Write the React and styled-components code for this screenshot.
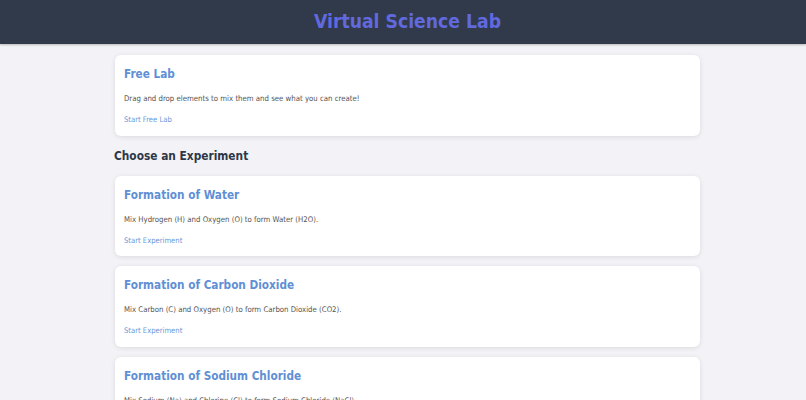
import React from 'react';
import styled, { createGlobalStyle } from 'styled-components';

const GlobalStyle = createGlobalStyle`
  html, body {
    margin: 0;
    padding: 0;
    overflow: hidden;
  }
  body {
    background: #f3f3f7;
    font-family: "DejaVu Sans Condensed", "DejaVu Sans", sans-serif;
    color: #4a4a4a;
  }
`;

const Header = styled.header`
  height: 44px;
  box-sizing: border-box;
  padding: 0 0 2px 9px;
  background: #313a4b;
  box-shadow: 0 1px 2px rgba(0, 0, 0, 0.25);
  display: flex;
  align-items: center;
  justify-content: center;

  h1 {
    margin: 0;
    font-size: 19.2px;
    font-weight: 700;
    color: #6169df;
  }
`;

const Main = styled.main`
  display: flex;
  flex-direction: column;
  gap: 10px;
  margin: 11px 106px 0 115px;
`;

const SectionTitle = styled.h2`
  margin: 0 0 0 -1px;
  font-size: 11.8px;
  font-weight: 700;
  color: #2d3748;
  line-height: 20px;
`;

const Card = styled.div`
  background: #fff;
  border-radius: 6px;
  box-shadow: 0 1px 5px rgba(0, 0, 0, 0.1);
  padding: 10px 10px 9.5px 9px;
  display: flex;
  flex-direction: column;

  h3 {
    margin: 0;
    font-size: 11.7px;
    font-weight: 700;
    color: #5f8fd5;
    line-height: 18px;
  }

  p {
    margin: 10px 0 0;
    font-size: 7.75px;
    line-height: 12px;
    color: #555;
  }
`;

const StartLink = styled.a`
  margin-top: 9px;
  font-size: 7.6px;
  line-height: 12px;
  color: #6a97d8;
  text-decoration: none;
  cursor: pointer;
`;

const experiments = [
  {
    title: 'Formation of Water',
    text: 'Mix Hydrogen (H) and Oxygen (O) to form Water (H2O).'
  },
  {
    title: 'Formation of Carbon Dioxide',
    text: 'Mix Carbon (C) and Oxygen (O) to form Carbon Dioxide (CO2).'
  },
  {
    title: 'Formation of Sodium Chloride',
    text: 'Mix Sodium (Na) and Chlorine (Cl) to form Sodium Chloride (NaCl).'
  }
];

const App = () => (
  <>
    <GlobalStyle />
    <Header>
      <h1>Virtual Science Lab</h1>
    </Header>
    <Main>
      <Card>
        <h3>Free Lab</h3>
        <p>Drag and drop elements to mix them and see what you can create!</p>
        <StartLink>Start Free Lab</StartLink>
      </Card>
      <SectionTitle>Choose an Experiment</SectionTitle>
      {experiments.map((exp) => (
        <Card key={exp.title}>
          <h3>{exp.title}</h3>
          <p>{exp.text}</p>
          <StartLink>Start Experiment</StartLink>
        </Card>
      ))}
    </Main>
  </>
);

export default App;
